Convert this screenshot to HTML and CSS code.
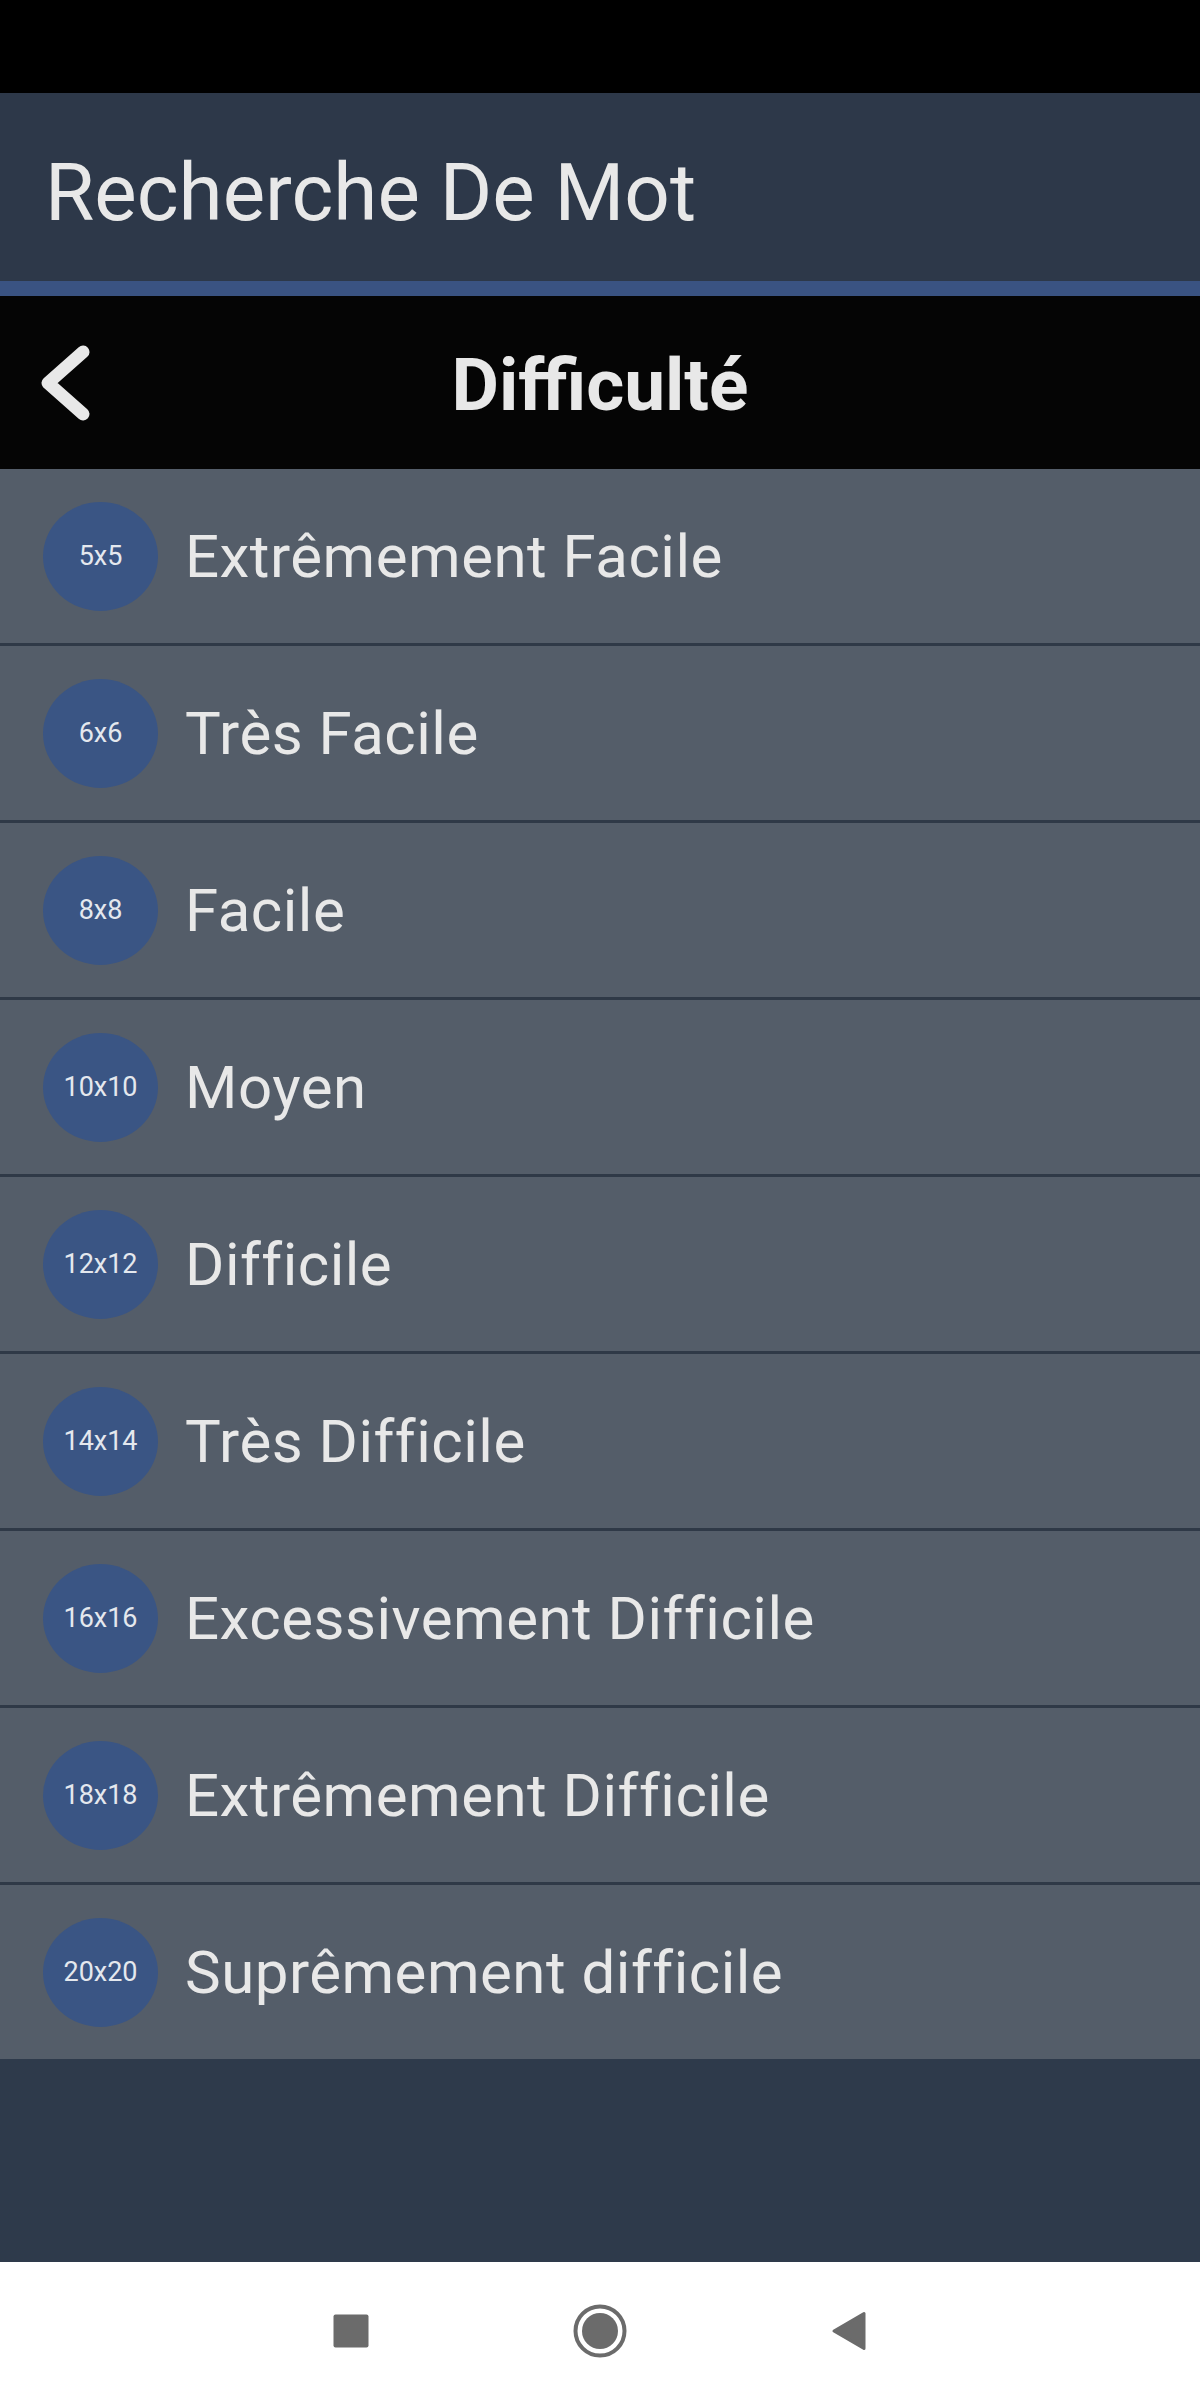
FILE: index.html
```html
<!DOCTYPE html>
<html lang="fr">
<head>
  <meta charset="UTF-8">
  <meta name="viewport" content="width=device-width, initial-scale=1.0">
  <title>Recherche De Mot</title>
  <link rel="stylesheet" href="styles.css">
</head>
<body>
  <div class="status-bar"></div>

  <header class="app-bar">
    <h1 class="app-title">Recherche De Mot</h1>
  </header>
  <div class="accent-line"></div>

  <div class="page-header">
    <div class="back-cell">
      <svg class="back-icon" width="60" height="90" viewBox="0 0 60 90">
        <polyline points="53,14 18,45 53,76" fill="none" stroke="#e8e8e8" stroke-width="13" stroke-linecap="round" stroke-linejoin="round"/>
      </svg>
    </div>
    <h2 class="page-title">Difficulté</h2>
    <div></div>
  </div>

  <ul class="level-list">
    <li class="level"><span class="badge">5x5</span><span class="label">Extrêmement Facile</span></li>
    <li class="level"><span class="badge">6x6</span><span class="label">Très Facile</span></li>
    <li class="level"><span class="badge">8x8</span><span class="label">Facile</span></li>
    <li class="level"><span class="badge">10x10</span><span class="label">Moyen</span></li>
    <li class="level"><span class="badge">12x12</span><span class="label">Difficile</span></li>
    <li class="level"><span class="badge">14x14</span><span class="label">Très Difficile</span></li>
    <li class="level"><span class="badge">16x16</span><span class="label">Excessivement Difficile</span></li>
    <li class="level"><span class="badge">18x18</span><span class="label">Extrêmement Difficile</span></li>
    <li class="level"><span class="badge">20x20</span><span class="label">Suprêmement difficile</span></li>
  </ul>

  <div class="filler"></div>

  <nav class="nav-bar">
    <div class="nav-btn">
      <svg width="60" height="60" viewBox="0 0 60 60">
        <rect x="12.5" y="13.5" width="35" height="33" rx="2" fill="#6b6b6b"/>
      </svg>
    </div>
    <div class="nav-btn">
      <svg width="60" height="60" viewBox="0 0 60 60">
        <circle cx="30" cy="30" r="24.5" fill="none" stroke="#6b6b6b" stroke-width="4"/>
        <circle cx="30" cy="30" r="18" fill="#6b6b6b"/>
      </svg>
    </div>
    <div class="nav-btn">
      <svg width="60" height="60" viewBox="0 0 60 60">
        <path d="M15 30 L45 12.5 L45 47.5 Z" fill="#6b6b6b" stroke="#6b6b6b" stroke-width="3" stroke-linejoin="round"/>
      </svg>
    </div>
  </nav>
</body>
</html>
```

FILE: styles.css
```css
* {
  box-sizing: border-box;
}

body {
  font-family: 'Roboto', 'Liberation Sans', sans-serif;
  background: #2e3a4b;
  margin: 0;
  padding: 0;
  height: 2400px;
  display: flex;
  flex-direction: column;
}

.status-bar {
  height: 93px;
  background: #000;
}

.app-bar {
  height: 188px;
  background: #2d3849;
  display: flex;
  align-items: center;
  padding-left: 45px;
}

.app-title {
  margin: 0;
  margin-top: 12px;
  font-size: 80px;
  font-weight: 400;
  color: #e8e8e8;
}

.accent-line {
  height: 15px;
  background: #3a5382;
}

.page-header {
  height: 173px;
  background: #050505;
  display: grid;
  grid-template-columns: 1fr auto 1fr;
  align-items: center;
}

.back-cell {
  padding-left: 30px;
  display: flex;
  align-items: center;
}

.page-title {
  margin: 0;
  margin-top: 4px;
  font-size: 73px;
  font-weight: 700;
  color: #e8e8e8;
}

.level-list {
  list-style: none;
  margin: 0;
  padding: 0;
}

.level {
  height: 177px;
  background: #545d69;
  border-bottom: 3px solid #2f3947;
  display: flex;
  align-items: center;
  padding-left: 43px;
  gap: 27px;
}

.level:last-child {
  height: 174px;
  border-bottom: none;
}

.badge {
  width: 115px;
  height: 109px;
  border-radius: 50%;
  background: #3a5584;
  color: #e4e8ee;
  font-size: 27px;
  display: flex;
  align-items: center;
  justify-content: center;
  flex-shrink: 0;
}

.label {
  font-size: 60px;
  letter-spacing: 0.5px;
  color: #e8e8e8;
}

.filler {
  flex: 1;
  background: #2e3a4b;
}

.nav-bar {
  height: 138px;
  background: #fff;
  display: flex;
  justify-content: center;
  align-items: center;
  gap: 189px;
}

.nav-btn {
  width: 60px;
  height: 60px;
}

.nav-btn svg {
  display: block;
}
```
